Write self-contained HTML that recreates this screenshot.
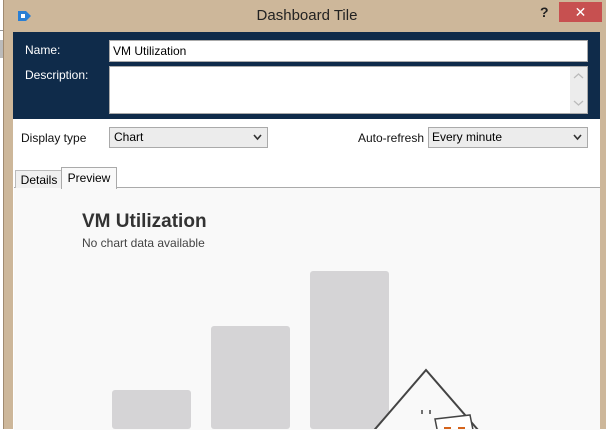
<!DOCTYPE html>
<html><head><style>
body{margin:0;width:606px;height:429px;overflow:hidden;background:#fff;font-family:"Liberation Sans",sans-serif;position:relative}
.a{position:absolute}
.chev{position:absolute;right:5px;top:6px}
</style></head><body>
<div class="a" style="left:0;top:0;width:606px;height:429px;background:#cdb79a"></div>
<div class="a" style="left:0;top:0;width:10px;height:429px;background:#fff"></div>
<div class="a" style="left:0;top:30px;width:10px;height:1px;background:#999"></div>
<div class="a" style="left:0;top:40px;width:3px;height:18px;background:#bbb"></div>
<div class="a" style="left:3px;top:0;width:603px;height:429px;background:#cdb79a;border-left:1px solid #a08a70"></div>
<svg class="a" style="left:16px;top:9px" width="16" height="14"><path d="M2 2h8l5 5-5 5H2z" fill="#2a7fd4"/><rect x="5" y="5" width="4" height="4" fill="#fff"/></svg>
<div class="a" style="left:0;width:614px;top:7px;text-align:center;font-size:15px;color:#222">Dashboard Tile</div>
<div class="a" style="left:540px;top:4px;font-size:14px;font-weight:bold;color:#222">?</div>
<div class="a" style="left:559px;top:2px;width:43px;height:20px;background:#c75050;color:#fff;text-align:center;font-size:14px;line-height:20px">✕</div>
<div class="a" style="left:13px;top:32px;width:587px;height:397px;background:#fff"></div>
<div class="a" style="left:13px;top:32px;width:587px;height:87px;background:#0f2b4a"></div>
<div class="a" style="left:25px;top:43px;font-size:12px;color:#fff">Name:</div>
<div class="a" style="left:25px;top:68px;font-size:12px;color:#fff">Description:</div>
<div class="a" style="left:109px;top:40px;background:#fff;border:1px solid #aaa;font-size:12px;line-height:20px;padding-left:3px;box-sizing:border-box;width:479px;height:22px">VM Utilization</div>
<div class="a" style="left:109px;top:66px;width:479px;height:48px;background:#fff;border:1px solid #aaa;box-sizing:border-box"></div>
<div class="a" style="left:570px;top:67px;width:17px;height:46px;background:#ececec"></div>
<svg class="a" style="left:573px;top:72px" width="11" height="36"><path d="M1 6l4.5-4 4.5 4M1 29l4.5 4 4.5-4" fill="none" stroke="#bbb" stroke-width="1.3"/></svg>
<div class="a" style="left:21px;top:131px;font-size:12px;color:#111">Display type</div>
<div class="a" style="left:109px;top:127px;width:159px;height:21px;background:#ececec;border:1px solid #aaa;box-sizing:border-box;font-size:12px;line-height:19px;padding-left:4px">Chart<svg class="chev" width="9" height="7"><path d="M1 1l3.5 4 3.5-4" fill="none" stroke="#333" stroke-width="1.6"/></svg></div>
<div class="a" style="left:358px;top:131px;font-size:12px;color:#111">Auto-refresh</div>
<div class="a" style="left:428px;top:127px;width:160px;height:21px;background:#ececec;border:1px solid #aaa;box-sizing:border-box;font-size:12px;line-height:19px;padding-left:3px">Every minute<svg class="chev" width="9" height="7"><path d="M1 1l3.5 4 3.5-4" fill="none" stroke="#333" stroke-width="1.6"/></svg></div>
<div class="a" style="left:14px;top:187px;width:586px;height:242px;background:#f9f9f9;border-top:1px solid #aaa"></div>
<div class="a" style="left:15px;top:170px;width:46px;height:17px;background:#f0f0f0;border:1px solid #bbb;border-bottom:none;font-size:12px;line-height:18px;text-align:center">Details</div>
<div class="a" style="left:61px;top:167px;width:54px;height:21px;background:#f9f9f9;border:1px solid #aaa;border-bottom:none;font-size:12px;line-height:20px;text-align:center">Preview</div>
<div class="a" style="left:82px;top:211px;font-size:19px;font-weight:bold;color:#333">VM Utilization</div>
<div class="a" style="left:82px;top:236px;font-size:12px;color:#444">No chart data available</div>
<div class="a" style="left:112px;top:390px;width:79px;height:39px;background:#d5d4d6;border-radius:3px"></div>
<div class="a" style="left:211px;top:326px;width:79px;height:103px;background:#d5d4d6;border-radius:3px"></div>
<div class="a" style="left:310px;top:271px;width:79px;height:158px;background:#d5d4d6;border-radius:3px"></div>
<svg class="a" style="left:360px;top:365px" width="150" height="64"><path d="M10 70L66 5l59 68" fill="#f9f9f9" stroke="#444" stroke-width="2"/><path d="M75 54l35-4 4 20-35 4z" fill="#fff" stroke="#444" stroke-width="1.5"/><rect x="84" y="62" width="7" height="6" fill="#d5641c"/><rect x="98" y="62" width="7" height="6" fill="#d5641c"/><path d="M62 45v4M70 45v4" stroke="#444" stroke-width="1.5"/></svg>
</body></html>
